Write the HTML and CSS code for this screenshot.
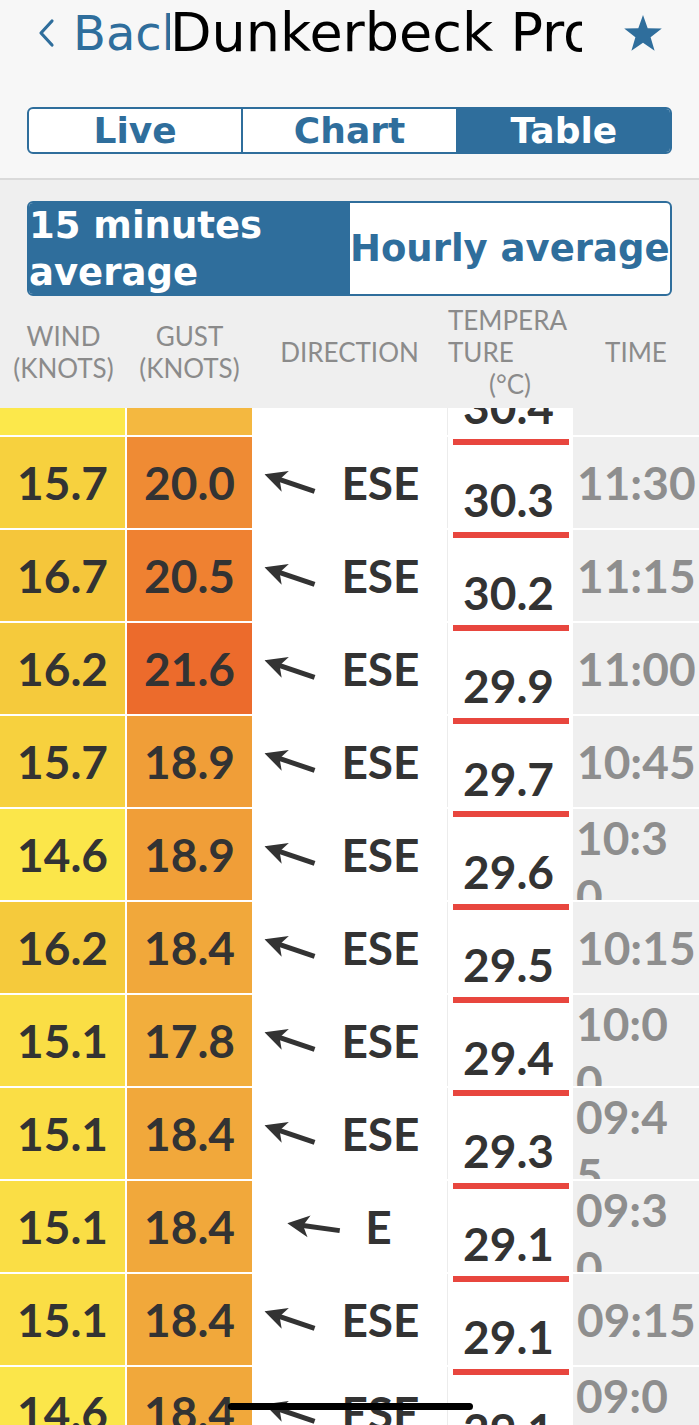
FILE: index.html
```html
<!DOCTYPE html>
<html lang="en">
<head>
<meta charset="utf-8">
<title>Dunkerbeck Pro</title>
<link rel="stylesheet" href="styles.css">
</head>
<body>
<div class="screen">
  <header class="topbar">
    <nav class="nav">
      <div class="back">
        <svg class="chev" viewBox="0 0 18 30" width="18" height="30" aria-hidden="true"><polyline points="15,3 4,15 15,27" fill="none" stroke="#2f6e9c" stroke-width="3.2" stroke-linecap="round" stroke-linejoin="round"/></svg>
        <span class="back-label">Back</span>
      </div>
      <div class="title">Dunkerbeck Pro</div>
      <svg class="star" viewBox="0 0 40 38" width="40" height="38" aria-hidden="true"><polygon points="20,1 24.7,14.3 38.8,14.6 27.6,23.2 31.6,36.7 20,28.7 8.4,36.7 12.4,23.2 1.2,14.6 15.3,14.3" fill="#2f6e9c"/></svg>
    </nav>
    <div class="seg seg-main">
      <div class="seg-item">Live</div>
      <div class="seg-item">Chart</div>
      <div class="seg-item active">Table</div>
    </div>
  </header>

  <div class="seg seg-avg">
    <div class="seg-item active left">15 minutes average</div>
    <div class="seg-item">Hourly average</div>
  </div>

  <div class="thead cols">
    <div class="th">WIND<br>(KNOTS)</div>
    <div class="th">GUST<br>(KNOTS)</div>
    <div class="th">DIRECTION</div>
    <div class="th temp-h"><span class="tl">TEMPERA<br>TURE</span><span class="tc">(°C)</span></div>
    <div class="th">TIME</div>
  </div>

  <div class="tbody">
    <div class="rows">
      <div class="row cols">
        <div class="c wind" style="background:#fce84b">14.6</div>
        <div class="c gust" style="background:#f4b840">17.4</div>
        <div class="c dir"><svg class="arrow ese" viewBox="0 0 54 24" width="54" height="24"><line x1="14" y1="12" x2="53" y2="12" stroke="#333" stroke-width="5"/><polygon points="0,12 22,1 16,12 22,23" fill="#333"/></svg><span>ESE</span></div>
        <div class="c temp"><span class="num">30.4</span></div>
        <div class="c time">11:45</div>
      </div>
      <div class="row cols">
        <div class="c wind" style="background:#f7d13e">15.7</div>
        <div class="c gust" style="background:#ef8b34">20.0</div>
        <div class="c dir"><svg class="arrow ese" viewBox="0 0 54 24" width="54" height="24"><line x1="14" y1="12" x2="53" y2="12" stroke="#333" stroke-width="5"/><polygon points="0,12 22,1 16,12 22,23" fill="#333"/></svg><span>ESE</span></div>
        <div class="c temp"><span class="num">30.3</span></div>
        <div class="c time">11:30</div>
      </div>
      <div class="row cols">
        <div class="c wind" style="background:#f5c63b">16.7</div>
        <div class="c gust" style="background:#ef8131">20.5</div>
        <div class="c dir"><svg class="arrow ese" viewBox="0 0 54 24" width="54" height="24"><line x1="14" y1="12" x2="53" y2="12" stroke="#333" stroke-width="5"/><polygon points="0,12 22,1 16,12 22,23" fill="#333"/></svg><span>ESE</span></div>
        <div class="c temp"><span class="num">30.2</span></div>
        <div class="c time">11:15</div>
      </div>
      <div class="row cols">
        <div class="c wind" style="background:#f5ca3c">16.2</div>
        <div class="c gust" style="background:#ec6b2c">21.6</div>
        <div class="c dir"><svg class="arrow ese" viewBox="0 0 54 24" width="54" height="24"><line x1="14" y1="12" x2="53" y2="12" stroke="#333" stroke-width="5"/><polygon points="0,12 22,1 16,12 22,23" fill="#333"/></svg><span>ESE</span></div>
        <div class="c temp"><span class="num">29.9</span></div>
        <div class="c time">11:00</div>
      </div>
      <div class="row cols">
        <div class="c wind" style="background:#f7d13e">15.7</div>
        <div class="c gust" style="background:#f09e38">18.9</div>
        <div class="c dir"><svg class="arrow ese" viewBox="0 0 54 24" width="54" height="24"><line x1="14" y1="12" x2="53" y2="12" stroke="#333" stroke-width="5"/><polygon points="0,12 22,1 16,12 22,23" fill="#333"/></svg><span>ESE</span></div>
        <div class="c temp"><span class="num">29.7</span></div>
        <div class="c time">10:45</div>
      </div>
      <div class="row cols">
        <div class="c wind" style="background:#fbe64a">14.6</div>
        <div class="c gust" style="background:#f09e38">18.9</div>
        <div class="c dir"><svg class="arrow ese" viewBox="0 0 54 24" width="54" height="24"><line x1="14" y1="12" x2="53" y2="12" stroke="#333" stroke-width="5"/><polygon points="0,12 22,1 16,12 22,23" fill="#333"/></svg><span>ESE</span></div>
        <div class="c temp"><span class="num">29.6</span></div>
        <div class="c time wrap">10:3<br>0</div>
      </div>
      <div class="row cols">
        <div class="c wind" style="background:#f5ca3c">16.2</div>
        <div class="c gust" style="background:#f1a83b">18.4</div>
        <div class="c dir"><svg class="arrow ese" viewBox="0 0 54 24" width="54" height="24"><line x1="14" y1="12" x2="53" y2="12" stroke="#333" stroke-width="5"/><polygon points="0,12 22,1 16,12 22,23" fill="#333"/></svg><span>ESE</span></div>
        <div class="c temp"><span class="num">29.5</span></div>
        <div class="c time">10:15</div>
      </div>
      <div class="row cols">
        <div class="c wind" style="background:#fade45">15.1</div>
        <div class="c gust" style="background:#f2ae3d">17.8</div>
        <div class="c dir"><svg class="arrow ese" viewBox="0 0 54 24" width="54" height="24"><line x1="14" y1="12" x2="53" y2="12" stroke="#333" stroke-width="5"/><polygon points="0,12 22,1 16,12 22,23" fill="#333"/></svg><span>ESE</span></div>
        <div class="c temp"><span class="num">29.4</span></div>
        <div class="c time wrap">10:0<br>0</div>
      </div>
      <div class="row cols">
        <div class="c wind" style="background:#fade45">15.1</div>
        <div class="c gust" style="background:#f1a83b">18.4</div>
        <div class="c dir"><svg class="arrow ese" viewBox="0 0 54 24" width="54" height="24"><line x1="14" y1="12" x2="53" y2="12" stroke="#333" stroke-width="5"/><polygon points="0,12 22,1 16,12 22,23" fill="#333"/></svg><span>ESE</span></div>
        <div class="c temp"><span class="num">29.3</span></div>
        <div class="c time wrap">09:4<br>5</div>
      </div>
      <div class="row cols">
        <div class="c wind" style="background:#fade45">15.1</div>
        <div class="c gust" style="background:#f1a83b">18.4</div>
        <div class="c dir dir-e"><svg class="arrow e" viewBox="0 0 54 24" width="54" height="24"><line x1="14" y1="12" x2="53" y2="12" stroke="#333" stroke-width="5"/><polygon points="0,12 22,1 16,12 22,23" fill="#333"/></svg><span>E</span></div>
        <div class="c temp"><span class="num">29.1</span></div>
        <div class="c time wrap">09:3<br>0</div>
      </div>
      <div class="row cols">
        <div class="c wind" style="background:#fade45">15.1</div>
        <div class="c gust" style="background:#f1a83b">18.4</div>
        <div class="c dir"><svg class="arrow ese" viewBox="0 0 54 24" width="54" height="24"><line x1="14" y1="12" x2="53" y2="12" stroke="#333" stroke-width="5"/><polygon points="0,12 22,1 16,12 22,23" fill="#333"/></svg><span>ESE</span></div>
        <div class="c temp"><span class="num">29.1</span></div>
        <div class="c time">09:15</div>
      </div>
      <div class="row cols">
        <div class="c wind" style="background:#fbe64a">14.6</div>
        <div class="c gust" style="background:#f1a83b">18.4</div>
        <div class="c dir"><svg class="arrow ese" viewBox="0 0 54 24" width="54" height="24"><line x1="14" y1="12" x2="53" y2="12" stroke="#333" stroke-width="5"/><polygon points="0,12 22,1 16,12 22,23" fill="#333"/></svg><span>ESE</span></div>
        <div class="c temp"><span class="num">29.1</span></div>
        <div class="c time wrap">09:0<br>0</div>
      </div>
    </div>
  </div>

  <div class="home-indicator"></div>
</div>
</body>
</html>
```

FILE: styles.css
```css
* { box-sizing: border-box; }
html, body { margin: 0; padding: 0; }
body {
  width: 699px;
  height: 1425px;
  overflow: hidden;
  background: #efefef;
  font-family: Lato, "Noto Sans", sans-serif;
  color: #333;
}
.screen {
  position: relative;
  height: 1425px;
  overflow: hidden;
  display: flex;
  flex-direction: column;
}

/* ---------- top bar ---------- */
.topbar {
  background: #f7f7f7;
  border-bottom: 2px solid #dadada;
  padding-bottom: 24px;
}
.nav {
  height: 66px;
  display: flex;
  align-items: center;
  font-family: "DejaVu Sans", sans-serif;
  line-height: 60px;
}
.back {
  width: 170px;
  flex: none;
  display: flex;
  align-items: center;
  overflow: hidden;
  white-space: nowrap;
  padding-left: 37px;
  color: #2f6e9c;
  font-size: 48px;
}
.chev { flex: none; margin-right: 18px; }
.back-label { flex: none; }
.title {
  width: 412px;
  flex: none;
  overflow: hidden;
  white-space: nowrap;
  font-size: 54px;
  color: #000;
}
.star { flex: none; margin-left: 41px; }

/* ---------- segmented controls ---------- */
.seg {
  margin: 0 27px;
  display: flex;
  border: 2px solid #2f6e9c;
  border-radius: 6px;
  overflow: hidden;
  background: #fff;
  font-family: "DejaVu Sans", sans-serif;
  font-weight: 700;
  color: #2f6e9c;
}
.seg-item {
  flex: 1 1 0;
  min-width: 0;
  display: flex;
  align-items: center;
  justify-content: center;
}
.seg-main {
  margin-top: 41px;
  height: 47px;
}
.seg-main .seg-item {
  font-size: 36px;
  border-left: 2px solid #2f6e9c;
}
.seg-main .seg-item:first-child { border-left: 0; }
.seg-item.active { background: #2f6e9c; color: #fff; }

.seg-avg {
  margin-top: 21px;
  height: 95px;
}
.seg-avg .seg-item {
  flex: 0 0 50%;
  font-size: 37px;
  line-height: 47px;
  white-space: nowrap;
}
.seg-avg .seg-item.left {
  justify-content: flex-start;
  white-space: normal;
}

/* ---------- table ---------- */
.cols {
  display: grid;
  grid-template-columns: 127px 125px 195px 126px 126px;
}
.thead {
  height: 112px;
  align-items: center;
  color: #8b8b8b;
  font-size: 26px;
  line-height: 32px;
  text-align: center;
}
.th { white-space: nowrap; }
.temp-h { display: flex; flex-direction: column; }
.temp-h .tl { text-align: left; padding-left: 1px; }
.temp-h .tc { text-align: center; }

.tbody {
  flex: 1;
  overflow: hidden;
  background: #fff;
}
.rows { margin-top: -64px; }
.row {
  height: 93px;
  border-bottom: 2px solid #fff;
  background: #fff;
  font-size: 46px;
  font-weight: 700;
  line-height: 56px;
}
.c {
  display: flex;
  align-items: center;
  justify-content: center;
  overflow: hidden;
}
.wind { border-right: 2px solid #fff; }
.dir {
  gap: 24px;
  padding-right: 16px;
}
.dir-e { padding-right: 20px; }
.arrow { flex: none; }
.arrow.ese { transform: rotate(19deg); }
.arrow.e { transform: rotate(8deg); }
.temp {
  flex-direction: column;
  justify-content: space-between;
  align-items: stretch;
  border-left: 1px solid #ececec;
  background: #fff;
  text-align: center;
}
.temp::before {
  content: "";
  display: block;
  height: 6px;
  margin: 2px 4px 0 5px;
  background: #e8463e;
}
.temp .num { display: block; padding-right: 4px; }
.time {
  background: #efefef;
  color: #8e8e8e;
  font-size: 46px;
  line-height: 58px;
  justify-content: flex-start;
  padding-left: 4px;
  white-space: nowrap;
}
.time.wrap {
  align-items: flex-start;
  flex-direction: column;
  justify-content: flex-start;
  padding-left: 3px;
}

.home-indicator {
  position: absolute;
  left: 228px;
  bottom: 15px;
  width: 245px;
  height: 7px;
  border-radius: 4px;
  background: #000;
}
```
